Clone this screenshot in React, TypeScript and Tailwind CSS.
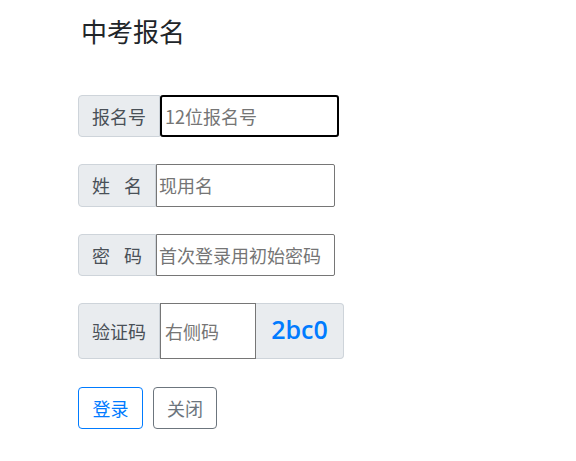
import React from "react";

const cjk = "font-['Noto_Sans_CJK_SC','Noto_Sans',sans-serif]";

const Label: React.FC<{ children: React.ReactNode }> = ({ children }) => (
  <span className="flex h-full items-center rounded-l-[4px] border border-[#ced4da] bg-[#e9ecef] px-[13px] text-[18px] text-[#495057]">
    {children}
  </span>
);

const Gap = () => <span className="inline-block w-[14px]" />;

export default function App() {
  return (
    <div className={`${cjk} min-h-[461px] w-[576px] bg-white pl-[78px]`}>
      <h1 className="pl-[3px] pt-[15px] text-[26px] leading-[1.2] font-normal text-[#212529]">
        中考报名
      </h1>

      <form className="mt-[49px] flex flex-col gap-[27px]" onSubmit={(e) => e.preventDefault()}>
        {/* 报名号 (focused) */}
        <div className="flex h-[42px] items-stretch">
          <Label>报名号</Label>
          <input
            className="w-[179px] rounded-[3px] border-2 border-black px-[3px] text-[18px] text-[#212529] placeholder:text-[#757575] outline-none"
            placeholder="12位报名号"
          />
        </div>

        {/* 姓名 */}
        <div className="flex h-[43px] items-stretch">
          <Label>
            姓<Gap />名
          </Label>
          <input
            className="w-[179px] rounded-r-[2px] border border-[#767676] px-[2px] text-[18px] placeholder:text-[#757575] outline-none"
            placeholder="现用名"
          />
        </div>

        {/* 密码 */}
        <div className="flex h-[42px] items-stretch">
          <Label>
            密<Gap />码
          </Label>
          <input
            type="password"
            className="w-[179px] rounded-r-[2px] border border-[#767676] px-[2px] text-[18px] placeholder:text-[#757575] outline-none"
            placeholder="首次登录用初始密码"
          />
        </div>

        {/* 验证码 */}
        <div className="flex h-[56px] items-stretch">
          <Label>验证码</Label>
          <input
            className="w-[96px] border border-[#767676] px-[4px] text-[18px] placeholder:text-[#757575] outline-none"
            placeholder="右侧码"
          />
          <span className="flex w-[88px] items-center justify-center rounded-r-[4px] border border-l-0 border-[#ced4da] bg-[#e9ecef] pb-[2px] font-['Open_Sans',sans-serif] text-[25px] font-semibold text-[#007bff]">
            2bc0
          </span>
        </div>

        <div className="mt-px flex gap-[10px]">
          <button
            type="submit"
            className="h-[42px] w-[65px] rounded-[4px] border border-[#007bff] text-[18px] text-[#007bff]"
          >
            登录
          </button>
          <button
            type="button"
            className="h-[42px] w-[64px] rounded-[4px] border border-[#6c757d] text-[18px] text-[#6c757d]"
          >
            关闭
          </button>
        </div>
      </form>
    </div>
  );
}
